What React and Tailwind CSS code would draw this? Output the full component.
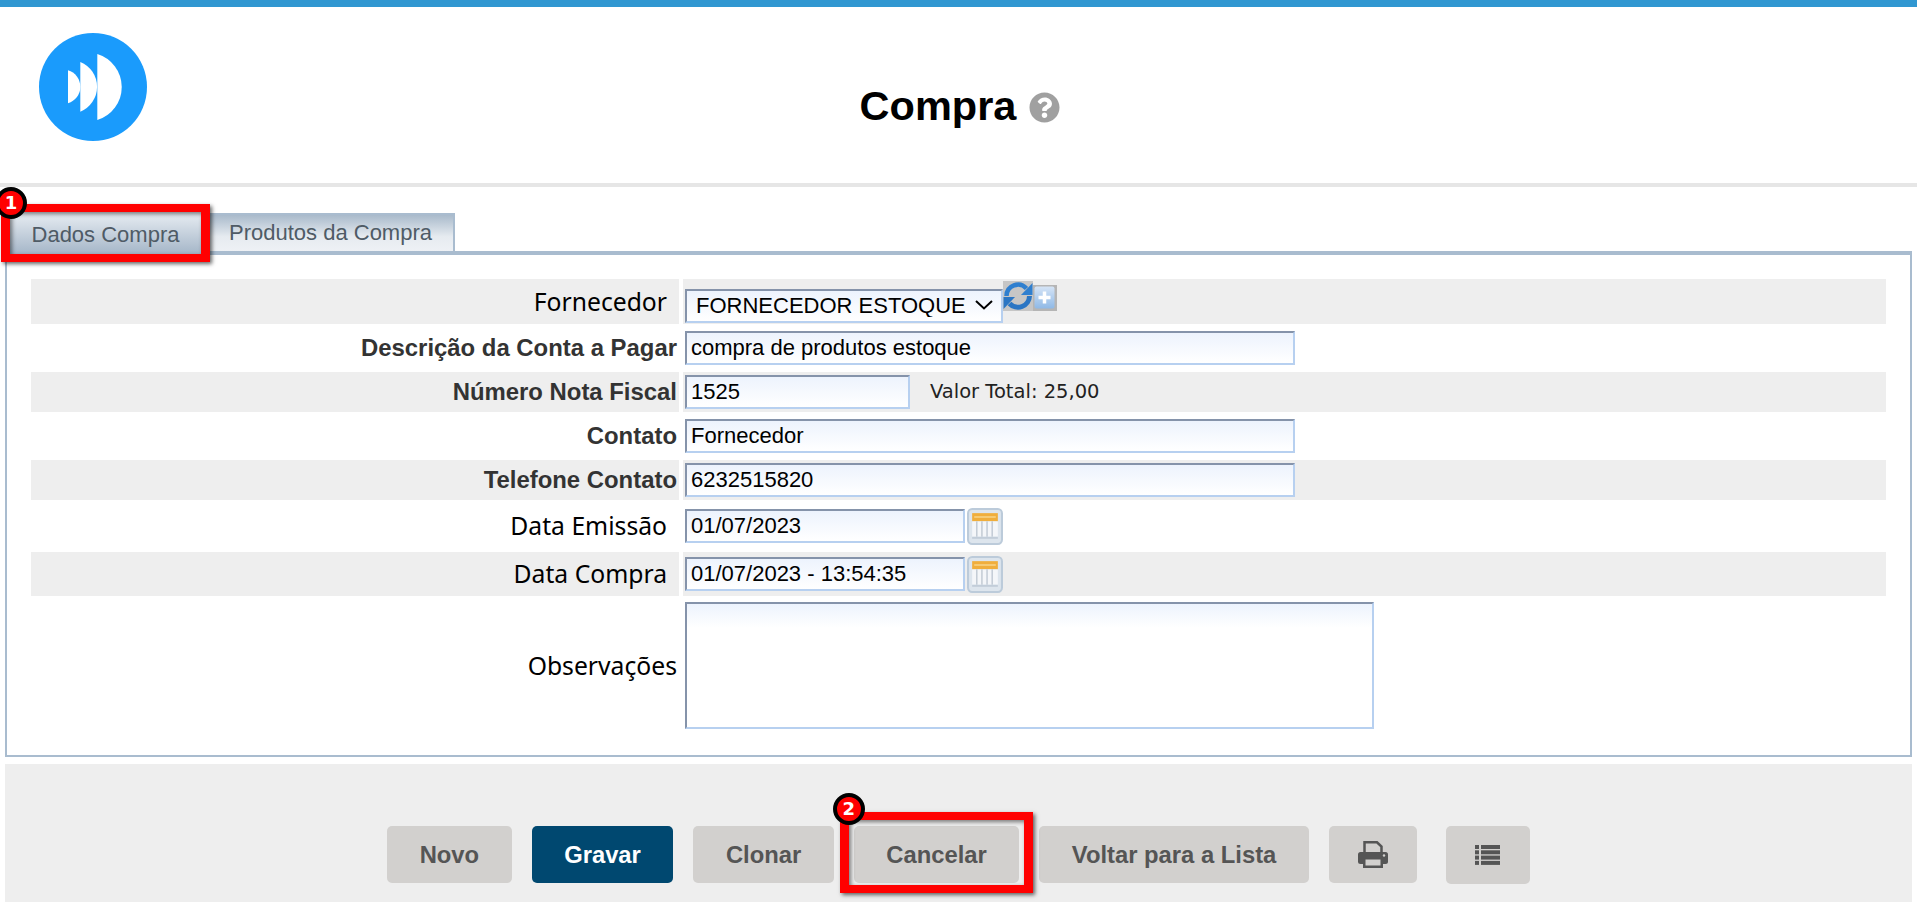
import React from "react";
import { FaQuestionCircle } from "react-icons/fa";

const inputClass =
  "block h-[34px] border-2 border-t-[#8593aa] border-l-[#8593aa] border-r-[#b7d0f0] border-b-[#b7d0f0] bg-gradient-to-b from-[#edf3fd] to-white pl-1 text-[22px] leading-none text-black outline-none font-['Liberation_Sans',Arial,sans-serif]";

function Logo() {
  return (
    <svg width="108" height="108" viewBox="0 0 108 108">
      <circle cx="54" cy="54" r="54" fill="#1a9bfc" />
      <path d="M58.3 21A34.5 34.5 0 0 1 58.3 87Z" fill="#fff" />
      <path d="M41.3 29A26.8 26.8 0 0 1 41.3 78.7Z" fill="#fff" />
      <path d="M29 37.3A17.2 17.2 0 0 1 29 70.3Z" fill="#fff" />
    </svg>
  );
}

function RefreshIcon() {
  return (
    <svg width="30" height="30" viewBox="0 0 30 30" className="shrink-0">
      <rect width="30" height="30" fill="#c6c6c6" />
      <path d="M3.500 15A11.500 11.500 0 0 1 23.500 7.500" fill="none" stroke="#2f7fcf" strokeWidth="4.500" />
      <path d="M29.500 2V14H18Z" fill="#2f7fcf" />
      <path d="M26.500 15A11.500 11.500 0 0 1 6.500 22.500" fill="none" stroke="#2b76c4" strokeWidth="5" />
      <path d="M0.500 28V16H12Z" fill="#2b76c4" />
    </svg>
  );
}

function PlusIcon() {
  return (
    <svg width="24" height="26" viewBox="0 0 24 26" className="mt-[4px] shrink-0">
      <defs>
        <linearGradient id="plusBg" x1="0" y1="0" x2="0" y2="1">
          <stop offset="0" stopColor="#d5e4f6" />
          <stop offset="1" stopColor="#8fb9e6" />
        </linearGradient>
      </defs>
      <rect width="24" height="26" fill="#b5b5b5" />
      <rect x="1.500" y="1.500" width="20" height="22" rx="2" fill="url(#plusBg)" />
      <path d="M11.500 6.500v12M5.500 12.500h12" stroke="#fff" strokeWidth="3.500" />
    </svg>
  );
}

function CalendarIcon() {
  return (
    <svg width="36" height="37" viewBox="0 0 35 36" className="ml-[2px] shrink-0">
      <rect x="1" y="1" width="33" height="34" rx="4" fill="#dde5ed" stroke="#bccbda" strokeWidth="2" />
      <rect x="5" y="5" width="25" height="8" fill="#f0ae3c" />
      <rect x="7" y="8" width="21" height="1.500" fill="#f8d486" />
      <rect x="5" y="13" width="25" height="15" fill="#f4f6f9" />
      <path d="M9.500 13v15M14.500 13v15M19.500 13v15M24.500 13v15" stroke="#c4ccd6" strokeWidth="1.500" />
      <rect x="5" y="28" width="25" height="2" fill="#c2cdd9" />
    </svg>
  );
}

function PrintIcon() {
  return (
    <svg width="30" height="27" viewBox="0 0 30 27">
      <path d="M6.500 13V1.250H19L23.500 5.500V13" fill="none" stroke="#555" strokeWidth="2.500" />
      <rect x="0" y="11" width="30" height="12" rx="2.500" fill="#555" />
      <rect x="6.250" y="17.250" width="17.500" height="8.500" fill="#d2d0ce" stroke="#555" strokeWidth="2.500" />
      <circle cx="26" cy="14.500" r="1.200" fill="#d2d0ce" />
    </svg>
  );
}

function ListIcon() {
  const rows = [0, 5.3, 10.6, 15.9];
  return (
    <svg width="25" height="20" viewBox="0 0 25 20">
      {rows.map((y) => (
        <g key={y} fill="#555">
          <rect x="0" y={y} width="4" height="4" />
          <rect x="6" y={y} width="19" height="4" />
        </g>
      ))}
    </svg>
  );
}

function Badge({ number, className }) {
  return (
    <span
      className={`absolute z-20 flex h-[32px] w-[32px] items-center justify-center rounded-full border-[4px] border-black bg-[#f00] text-[18px] font-bold leading-none text-white font-['DejaVu_Sans',sans-serif] ${className}`}
    >
      {number}
    </span>
  );
}

function Row({ label, bold, inset, striped, height, alignTop, children }) {
  const stripe = striped ? "bg-[#eeeeee]" : "";
  return (
    <div className={`grid grid-cols-[648px_1fr] gap-x-[4px] ${height}`}>
      <div className={`flex items-center justify-end ${stripe} ${inset ? "pr-[12px]" : "pr-[2px]"}`}>
        <span
          className={
            bold
              ? "text-[23.900px] font-bold text-[#333] font-['Liberation_Sans',Arial,sans-serif]"
              : "text-[24.700px] text-black font-['Noto_Sans',sans-serif]"
          }
        >
          {label}
        </span>
      </div>
      <div className={`flex pl-[2px] ${alignTop ? "items-start" : "items-center"} ${stripe}`}>{children}</div>
    </div>
  );
}

function ActionButton({ children, primary, className = "" }) {
  return (
    <button
      type="button"
      className={`flex h-[57px] items-center justify-center rounded-[5px] px-[32.500px] text-[23.800px] font-bold font-['Liberation_Sans',Arial,sans-serif] ${
        primary ? "bg-[#004870] text-white" : "bg-[#d2d0ce] text-[#555]"
      } ${className}`}
    >
      {children}
    </button>
  );
}

export default function App() {
  return (
    <div className="flex h-[902px] flex-col overflow-hidden bg-white">
      <div className="h-[7px] bg-[#3097d1]" />

      <header className="grid h-[180px] grid-cols-[1fr_auto_1fr] border-b-4 border-[#e6e6e6]">
        <div className="pl-[39px] pt-[26px]">
          <Logo />
        </div>
        <div className="flex items-center gap-[13px] pl-[3px] pt-[22px]">
          <h1 className="text-[41.500px] font-bold leading-none text-black font-['Liberation_Sans',Arial,sans-serif]">
            Compra
          </h1>
          <FaQuestionCircle className="mt-[3px] h-[31px] w-[31px] text-[#a0a0a0]" />
        </div>
        <div />
      </header>

      <div className="relative flex h-[64px] items-end pl-[10px] font-['Liberation_Sans',Arial,sans-serif]">
        <div className="relative z-10 -mb-[5px] flex h-[44px] w-[191px] items-center justify-center border-b-2 border-white bg-gradient-to-b from-[#e9eef3] to-[#a5b6c8] pt-[2px] text-[22px] text-[#4f5b66]">
          Dados Compra
          <span className="absolute -bottom-[8px] -left-[9px] -right-[9px] -top-[8px] border-x-[9px] border-y-[8px] border-[#f00] shadow-[2px_2px_4px_rgba(0,0,0,0.6),inset_2px_2px_4px_rgba(0,0,0,0.5)]" />
        </div>
        <div className="flex h-[38px] w-[254px] items-center border-2 border-b-0 border-[#a9bccf] bg-gradient-to-b from-[#a9bacb] via-[#e6ebf0] via-60% to-[#eef1f5] pb-[1px] pl-[26px] text-[22px] text-[#4f5b66]">
          Produtos da Compra
        </div>
        <Badge number="1" className="-left-[5px] top-0" />
      </div>

      <main className="mx-[5px] h-[506px] border-2 border-t-4 border-[#a9bccf] px-[24px] pt-[24px]">
        <Row label="Fornecedor" inset striped height="h-[45px]" alignTop>
          <div className="relative mt-[10px]">
            <select className={`${inputClass} w-[318px] appearance-none pl-[9px]`} defaultValue="1">
              <option value="1">FORNECEDOR ESTOQUE</option>
            </select>
            <svg width="18" height="10" viewBox="0 0 18 10" className="absolute right-[10px] top-[11px]">
              <path d="M1 1l8 7.500L17 1" fill="none" stroke="#000" strokeWidth="2" />
            </svg>
          </div>
          <div className="mt-[2px] flex items-start">
            <RefreshIcon />
            <PlusIcon />
          </div>
        </Row>
        <Row label="Descrição da Conta a Pagar" bold height="h-[48px]">
          <input readOnly value="compra de produtos estoque" className={`${inputClass} w-[610px]`} />
        </Row>
        <Row label="Número Nota Fiscal" bold striped height="h-[40px]">
          <input readOnly value="1525" className={`${inputClass} w-[225px]`} />
          <span className="ml-[20px] text-[19.500px] text-[#222] font-['DejaVu_Sans',sans-serif]">Valor Total: 25,00</span>
        </Row>
        <Row label="Contato" bold height="h-[48px]">
          <input readOnly value="Fornecedor" className={`${inputClass} w-[610px]`} />
        </Row>
        <Row label="Telefone Contato" bold striped height="h-[40px]">
          <input readOnly value="6232515820" className={`${inputClass} w-[610px]`} />
        </Row>
        <Row label="Data Emissão" inset height="h-[52px]">
          <input readOnly value="01/07/2023" className={`${inputClass} w-[280px]`} />
          <CalendarIcon />
        </Row>
        <Row label="Data Compra" inset striped height="h-[44px]">
          <input readOnly value="01/07/2023 - 13:54:35" className={`${inputClass} w-[280px]`} />
          <CalendarIcon />
        </Row>
        <Row label="Observações" height="h-[139px]" alignTop>
          <textarea
            readOnly
            className="mt-[6px] block h-[127px] w-[689px] resize-none border-2 border-t-[#8593aa] border-l-[#8593aa] border-r-[#b7d0f0] border-b-[#b7d0f0] bg-gradient-to-b from-[#edf3fd] to-white to-[24px] outline-none"
          />
        </Row>
      </main>

      <footer className="mx-[5px] mt-[7px] flex flex-1 items-start justify-center gap-[20px] bg-[#eeeeee] pt-[62px]">
        <ActionButton>Novo</ActionButton>
        <ActionButton primary>Gravar</ActionButton>
        <ActionButton>Clonar</ActionButton>
        <div className="relative">
          <ActionButton>Cancelar</ActionButton>
          <span className="absolute -bottom-[10px] -left-[14px] -right-[14px] -top-[14px] border-x-[9px] border-y-[8px] border-[#f00] shadow-[2px_2px_4px_rgba(0,0,0,0.6),inset_2px_2px_4px_rgba(0,0,0,0.5)]" />
          <Badge number="2" className="-left-[21px] -top-[33px]" />
        </div>
        <ActionButton>Voltar para a Lista</ActionButton>
        <ActionButton className="w-[88px] !px-0">
          <PrintIcon />
        </ActionButton>
        <ActionButton className="ml-[9px] h-[58px] w-[84px] !px-0">
          <ListIcon />
        </ActionButton>
      </footer>
    </div>
  );
}
